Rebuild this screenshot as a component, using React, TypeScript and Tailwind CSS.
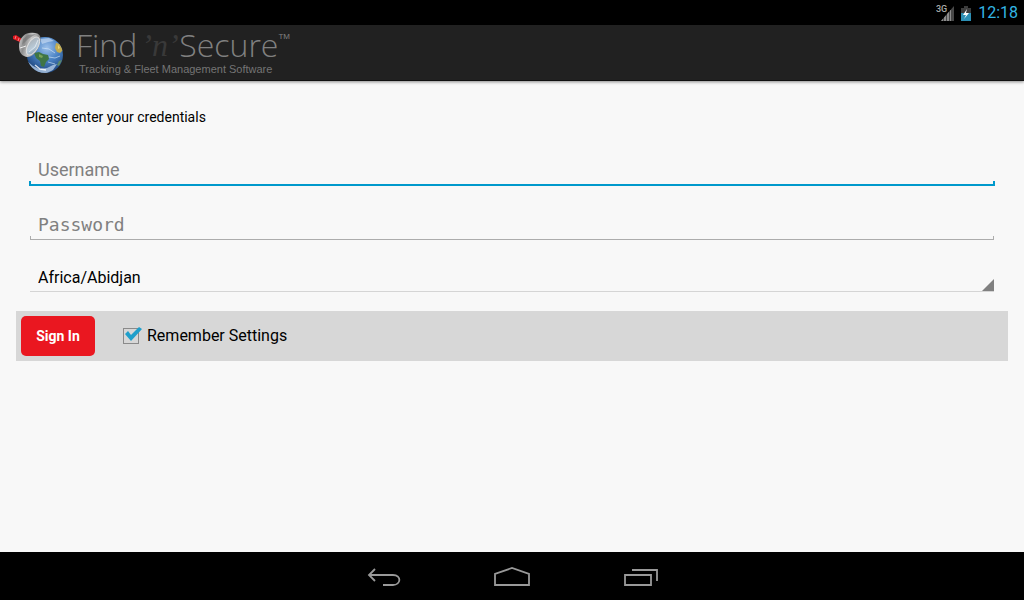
import { useState } from "react";

const timeZones = ["Africa/Abidjan", "Africa/Accra", "Africa/Addis_Ababa", "Africa/Algiers"];

const StatusBar = () => (
  <div className="h-[25px] bg-black flex items-center justify-end px-[6px]">
    <svg width="20" height="18" viewBox="0 0 20 18" aria-label="3G signal">
      <path d="M18 2v15H5z" fill="#484848" />
      <path d="M18 2v15H5z" fill="#8c8c8c" clipPath="url(#bars)" />
      <clipPath id="bars">
        <path d="M5 0h2v18H5zM8 0h2v18H8zM11 0h2v18h-2zM14 0h1v18h-1z" />
      </clipPath>
      <text x="0" y="8" fontSize="9" fontWeight="500" fill="#aaa" className="font-['Roboto',sans-serif]">
        3G
      </text>
    </svg>
    <svg className="ml-1 mr-[6px]" width="12" height="18" viewBox="0 0 12 18" aria-label="Battery">
      <path d="M4 2h4v2h3v6H1V4h3z" fill="#3c3c3c" />
      <path d="M1 9h10v8H1z" fill="#2c8fb4" />
      <path d="M7 5 3 11h3l-2 4 5-6H6z" fill="#fff" />
    </svg>
    <time className="text-base leading-6 text-[#33b5e5]">12:18</time>
  </div>
);

const Globe = () => (
  <svg width="52" height="46" viewBox="0 0 52 46" aria-hidden="true">
    <defs>
      <radialGradient id="sea" cx="0.55" cy="0.3" r="0.7">
        <stop offset="0" stopColor="#9cc0ea" />
        <stop offset="0.5" stopColor="#4a82c4" />
        <stop offset="1" stopColor="#1b4279" />
      </radialGradient>
      <linearGradient id="rim" x1="0" y1="0" x2="1" y2="0.3">
        <stop offset="0" stopColor="#d6d6d6" />
        <stop offset="0.35" stopColor="#8e8e8e" />
        <stop offset="0.6" stopColor="#c9c9c9" />
        <stop offset="1" stopColor="#7c7c7c" />
      </linearGradient>
      <linearGradient id="lens" x1="0" y1="0" x2="1" y2="1">
        <stop offset="0" stopColor="#a7abb0" />
        <stop offset="0.6" stopColor="#b9cbd9" />
        <stop offset="1" stopColor="#7d94aa" />
      </linearGradient>
      <clipPath id="planet">
        <circle cx="33" cy="25" r="18" />
      </clipPath>
    </defs>
    <circle cx="33" cy="25" r="18" fill="url(#sea)" />
    <g clipPath="url(#planet)">
      <path d="M22 23l5-1 4 2 5 1 1 4-3 3-2 5-3-1-1-5-4-3z" fill="#3f7546" />
      <path d="M27 24l4 2-1 2-3-1z" fill="#79a257" />
      <path d="M44 13l4 1 3 6-3 3-3-1-2-4z" fill="#c4ab50" />
      <path d="M46 15l2 3-2 1z" fill="#ead674" />
      <path d="M47 31l3-1-3 6-2-1z" fill="#5d8a68" />
      <path d="M15 31l6 5 6 3 8-1 6-3 4-1-4 6-8 4-12-3z" fill="#bcd3ec" opacity="0.75" />
      <path d="M28 9l9-1 5 3-6 1-6 2z" fill="#dceafa" opacity="0.55" />
      <path d="M30 18l7 1 6 4M37 27l6 1 5-2M36 32l7 2" stroke="#dcecfa" strokeWidth="1" fill="none" opacity="0.6" />
      <path d="M23 35l5 4 6 1" stroke="#fff" strokeWidth="1.5" fill="none" opacity="0.8" />
    </g>
    <path d="M1 6l3-1 6 4v4L1 9z" fill="#e01820" />
    <path d="M4 6l-1 3M7 8l-1 3" stroke="#f0b0b0" strokeWidth="0.7" />
    <path d="M7 16c0-6 4-12 10-13 5-1 10 0 11 3 2 5-2 14-6 18-3 3-7 4-10 2-4-2-5-6-5-10z" fill="url(#rim)" />
    <path d="M11 9l5-4 8-1-8 5-6 6z" fill="#6f6f6f" opacity="0.6" />
    <ellipse cx="21" cy="16" rx="5" ry="10" transform="rotate(31 21 16)" fill="url(#lens)" stroke="#dedede" strokeWidth="1" />
    <path d="M17 22l6-5 3-7" stroke="#e6eef5" strokeWidth="1" fill="none" opacity="0.8" />
    <path d="M8 18l6-2" stroke="#ececec" strokeWidth="1" />
  </svg>
);

const Header = () => (
  <header className="h-14 bg-[#212121] border-b border-[#111] shadow-[0_1px_3px_rgba(0,0,0,0.45)] flex items-center pl-3">
    <Globe />
    <div className="ml-3 text-[#747474]">
      <h1 className="flex items-start h-8 font-['Open_Sans',sans-serif] font-light text-[32px] leading-7 text-[#808080]">
        Find
        <span className="w-[42px] pl-1 font-['Liberation_Serif',serif] italic font-normal text-[#393939]">’n’</span>
        Secure
        <span className="font-['Liberation_Sans',sans-serif] font-normal text-[8px] leading-3">TM</span>
      </h1>
      <p className="pl-[3px] font-['Liberation_Sans',sans-serif] text-[11px] leading-3">
        Tracking &amp; Fleet Management Software
      </p>
    </div>
  </header>
);

const LoginForm = () => {
  const [username, setUsername] = useState("");
  const [password, setPassword] = useState("");
  const [remember, setRemember] = useState(true);

  return (
    <form className="px-4 pt-[26px] text-black" onSubmit={(e) => e.preventDefault()}>
      <p className="pl-[10px] text-sm leading-5">Please enter your credentials</p>

      {/* Username */}
      <div className="mt-[27px] mx-[13px] flex items-end">
        <span className="w-[2px] h-[5px] bg-[#0099cc]" />
        <input
          type="text"
          aria-label="Username"
          placeholder="Username"
          value={username}
          onChange={(e) => setUsername(e.target.value)}
          className="flex-1 min-w-0 h-8 px-[7px] text-lg border-b-2 border-[#0099cc] placeholder:text-[#808080] outline-none"
        />
        <span className="w-[2px] h-[5px] bg-[#0099cc]" />
      </div>

      {/* Password */}
      <div className="mt-[22px] mx-[14px] flex items-end">
        <span className="w-px h-1 bg-[#acacac]" />
        <input
          type="password"
          aria-label="Password"
          placeholder="Password"
          value={password}
          onChange={(e) => setPassword(e.target.value)}
          className="flex-1 min-w-0 h-8 pt-px px-[7px] font-['DejaVu_Sans_Mono',monospace] text-lg border-b border-[#acacac] placeholder:text-[#808080] outline-none"
        />
        <span className="w-px h-1 bg-[#acacac]" />
      </div>

      {/* Time zone */}
      <div className="mt-5 mx-[14px] flex items-end border-b border-[#d5d5d5]">
        <select
          aria-label="Time zone"
          className="flex-1 min-w-0 h-[31px] pt-1 px-2 text-base appearance-none outline-none"
        >
          {timeZones.map((zone) => (
            <option key={zone}>{zone}</option>
          ))}
        </select>
        <svg width="12" height="12" viewBox="0 0 12 12" aria-hidden="true">
          <path d="M12 0v12H0z" fill="#808080" />
        </svg>
      </div>

      <div className="mt-[19px] p-[5px] bg-[#d7d7d7] flex items-center">
        <button type="submit" className="w-[74px] h-10 rounded-[5px] bg-[#ea1720] text-white text-sm font-bold">
          Sign In
        </button>
        <label className="ml-7 flex items-center text-base">
          <span className="grid mr-1">
            <input
              type="checkbox"
              checked={remember}
              onChange={(e) => setRemember(e.target.checked)}
              className="peer col-start-1 row-start-1 self-center size-4 appearance-none border border-[#8a8a8a]"
            />
            <svg
              className="col-start-1 row-start-1 invisible peer-checked:visible pointer-events-none"
              width="20"
              height="20"
              viewBox="0 0 20 20"
            >
              <path d="M2 8l3-3 3 4 8-8 3 2L8 15z" fill="#1f9fcb" />
            </svg>
          </span>
          Remember Settings
        </label>
      </div>
    </form>
  );
};

const NavBar = () => (
  <nav className="h-12 pt-[3px] bg-black flex items-center justify-center gap-[92px]">
    <button type="button" aria-label="Back">
      <svg width="36" height="24" viewBox="0 0 36 24" fill="none" stroke="#999" strokeWidth="1.8">
        <path d="M9 3 3 9l6 6M3 9h24c9 0 8 10 0 10H17" />
      </svg>
    </button>
    <button type="button" aria-label="Home">
      <svg width="36" height="24" viewBox="0 0 36 24" fill="none" stroke="#999" strokeWidth="1.8">
        <path d="M1 19V8l17-6 17 6v11z" />
      </svg>
    </button>
    <button type="button" aria-label="Recent apps">
      <svg width="36" height="24" viewBox="0 0 36 24" fill="none" stroke="#999" strokeWidth="1.8">
        <path d="M3 9h26v10H3zM10 4h25v11" />
      </svg>
    </button>
  </nav>
);

const App = () => {
  return (
    <div className="min-h-screen flex flex-col bg-[#f8f8f8] font-['Roboto',sans-serif]">
      <StatusBar />
      <Header />
      <main className="flex-1">
        <LoginForm />
      </main>
      <NavBar />
    </div>
  );
};

export default App;
